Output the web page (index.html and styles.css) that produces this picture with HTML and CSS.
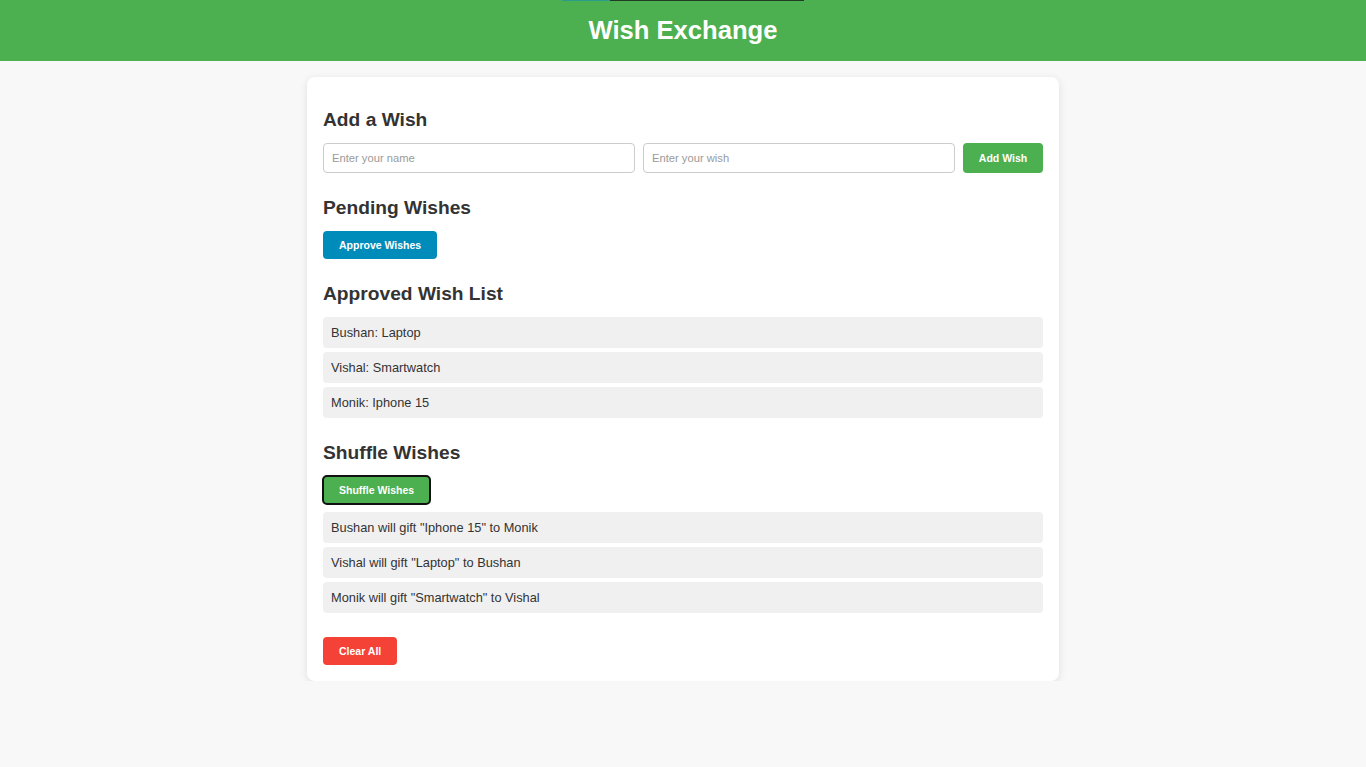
FILE: index.html
```html
<!DOCTYPE html>
<html lang="en">
<head>
<meta charset="utf-8">
<title>Wish Exchange</title>
<link rel="stylesheet" href="styles.css">
</head>
<body>
<header class="header">
  <div class="topline"><span class="topline-a"></span><span class="topline-b"></span></div>
  <h1 class="title">Wish Exchange</h1>
</header>
<main class="card">
  <section class="section first">
    <h2 class="heading">Add a Wish</h2>
    <div class="form-row">
      <input class="field" type="text" placeholder="Enter your name">
      <input class="field" type="text" placeholder="Enter your wish">
      <button class="btn btn-green">Add Wish</button>
    </div>
  </section>
  <section class="section">
    <h2 class="heading">Pending Wishes</h2>
    <div><button class="btn btn-blue">Approve Wishes</button></div>
  </section>
  <section class="section">
    <h2 class="heading">Approved Wish List</h2>
    <ul class="list">
      <li class="item">Bushan: Laptop</li>
      <li class="item">Vishal: Smartwatch</li>
      <li class="item">Monik: Iphone 15</li>
    </ul>
  </section>
  <section class="section">
    <h2 class="heading">Shuffle Wishes</h2>
    <div><button class="btn btn-green btn-focus">Shuffle Wishes</button></div>
    <ul class="list shuffle-list">
      <li class="item">Bushan will gift "Iphone 15" to Monik</li>
      <li class="item">Vishal will gift "Laptop" to Bushan</li>
      <li class="item">Monik will gift "Smartwatch" to Vishal</li>
    </ul>
  </section>
  <div class="clear-row"><button class="btn btn-red">Clear All</button></div>
</main>
</body>
</html>
```

FILE: styles.css
```css
* { box-sizing: border-box; }
html, body { margin: 0; padding: 0; }
body {
  background: #f8f8f8;
  font-family: "Liberation Sans", Arial, sans-serif;
  color: #333;
}
.header {
  position: relative;
  background: #4caf50;
  padding: 16px 0 16px;
  text-align: center;
}
.topline {
  position: absolute;
  top: 0;
  left: 562px;
  display: flex;
  height: 1px;
}
.topline-a { width: 48px; background: #2a9c8c; }
.topline-b { width: 194px; background: #203a24; }
.title {
  margin: 0;
  color: #fff;
  font-size: 25.6px;
  line-height: 29px;
  font-weight: bold;
}
.card {
  width: 752px;
  margin: 16px auto 0;
  background: #fff;
  border-radius: 8px;
  box-shadow: 0 2px 8px rgba(0, 0, 0, 0.1);
  padding: 31px 16px 16px;
}
.section { margin-top: 23px; }
.section.first { margin-top: 0; }
.heading {
  margin: 0 0 12px;
  padding-top: 1px;
  font-size: 19.2px;
  line-height: 22px;
  font-weight: bold;
  color: #333;
}
.form-row {
  display: flex;
  gap: 8px;
  height: 30px;
}
.field {
  flex: 1;
  min-width: 0;
  height: 30px;
  border: 1px solid #ccc;
  border-radius: 4px;
  padding: 0 8px;
  font-family: "Liberation Sans", Arial, sans-serif;
  font-size: 11.2px;
  color: #333;
}
.field::placeholder { color: #9a9a9a; }
.btn {
  border: none;
  border-radius: 4px;
  color: #fff;
  font-family: "Liberation Sans", Arial, sans-serif;
  font-size: 10.5px;
  font-weight: bold;
  line-height: 12px;
  padding: 8px 16px;
  cursor: pointer;
}
.form-row .btn { width: 80px; padding: 0; }
.btn-green { background: #4caf50; }
.btn-blue { background: #008cba; }
.btn-red { background: #f44336; }
.btn-focus {
  outline: 2px solid #111;
  outline-offset: -1px;
}
.list {
  list-style: none;
  margin: 0;
  padding: 0;
  display: flex;
  flex-direction: column;
  gap: 4px;
}
.shuffle-list { margin-top: 8px; }
.item {
  background: #f0f0f0;
  border-radius: 4px;
  padding: 8px 8px;
  font-size: 12.8px;
  line-height: 15px;
  color: #333;
}
.clear-row { margin-top: 24px; }
```
